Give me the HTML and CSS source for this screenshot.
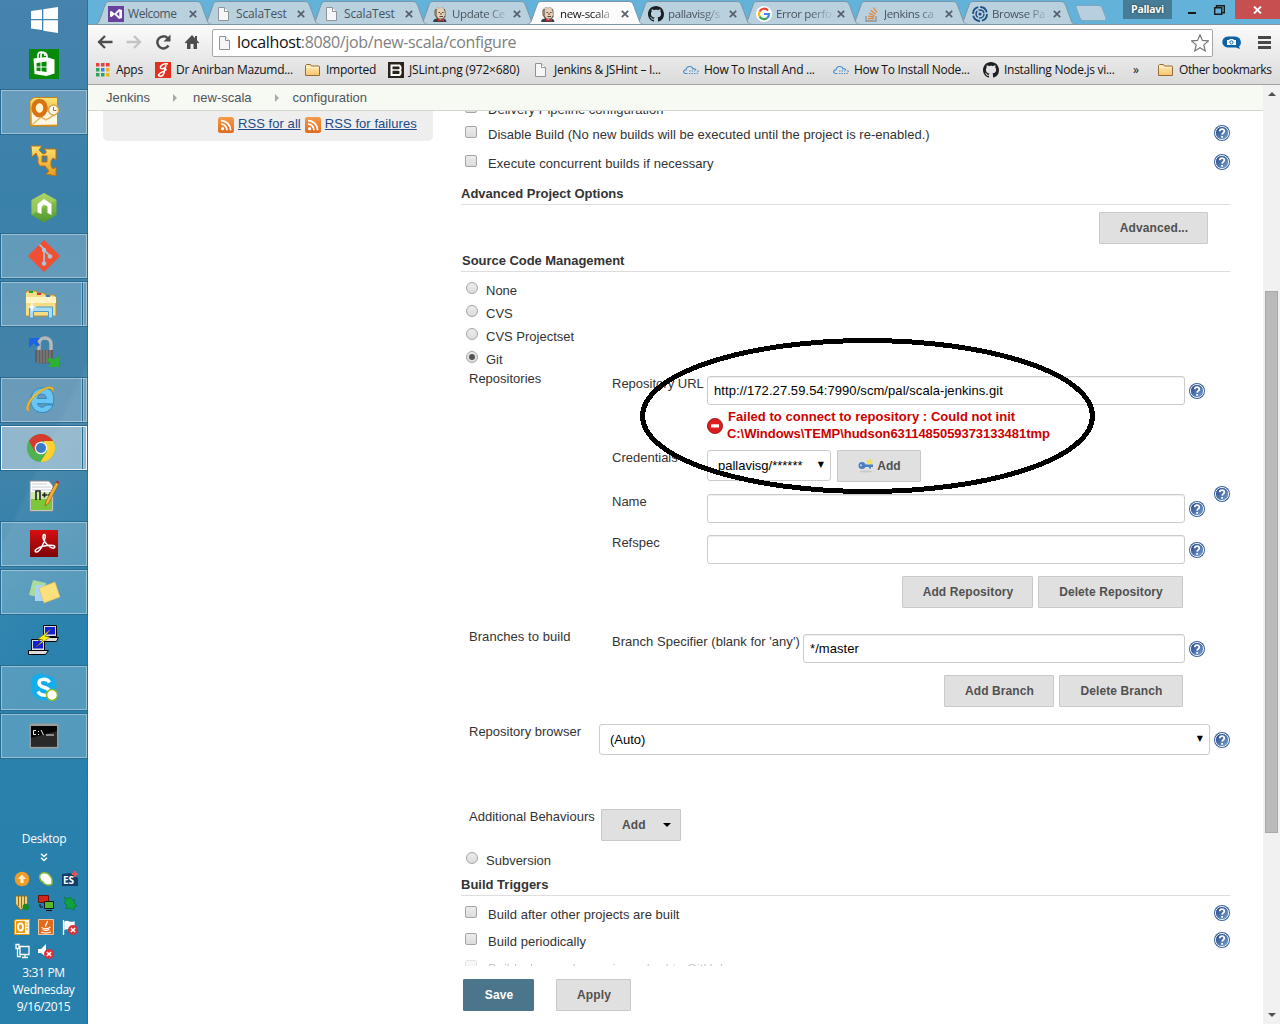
FILE: index.html
```html
<!DOCTYPE html>
<html lang="en">
<head>
<meta charset="utf-8">
<title>new-scala configuration [Jenkins]</title>
<link rel="stylesheet" href="styles.css">
</head>
<body>
<svg class="defs" width="0" height="0">
  <defs>
    <linearGradient id="gh" x1="0" y1="0" x2="1" y2="1"><stop offset="0" stop-color="#1d3f80"/><stop offset="1" stop-color="#7fa6d6"/></linearGradient>
    <linearGradient id="gr" x1="0" y1="0" x2="0" y2="1"><stop offset="0" stop-color="#f59b49"/><stop offset="1" stop-color="#e06a1f"/></linearGradient>
    <linearGradient id="gf" x1="0" y1="0" x2="0" y2="1"><stop offset="0" stop-color="#fff0b8"/><stop offset="1" stop-color="#f9c46c"/></linearGradient>
    <linearGradient id="gy" x1="0" y1="0" x2="0" y2="1"><stop offset="0" stop-color="#ffe375"/><stop offset="1" stop-color="#e79a1c"/></linearGradient>
    <linearGradient id="gn" x1="0" y1="0" x2="0" y2="1"><stop offset="0" stop-color="#a2cf59"/><stop offset="1" stop-color="#4e9a2c"/></linearGradient>
    <linearGradient id="gp" x1="0" y1="0" x2="0" y2="1"><stop offset="0" stop-color="#d60f12"/><stop offset="1" stop-color="#7d0406"/></linearGradient>
  </defs>
  <symbol id="help" viewBox="0 0 16 16"><circle cx="8" cy="8" r="8" fill="#3b639f"/><circle cx="8" cy="8" r="6.600" fill="url(#gh)" stroke="#e8eef8" stroke-width="1"/><path d="M5.700 6.300C5.800 3.400 10.400 3.500 10.300 6.200 10.200 7.800 8.200 7.900 8.100 9.600M8.100 11v1.700" fill="none" stroke="#fff" stroke-width="1.800"/></symbol>
  <symbol id="rss" viewBox="0 0 16 16"><rect width="16" height="16" rx="2.500" fill="url(#gr)"/><circle cx="4.600" cy="11.700" r="1.600" fill="#fff"/><path d="M3 7.200a6 6 0 0 1 6 6M3 3.600a9.600 9.600 0 0 1 9.600 9.600" fill="none" stroke="#fff" stroke-width="1.800"/></symbol>
  <symbol id="page" viewBox="0 0 16 16"><path d="M2.500 1.500h6l4 4v9h-10z" fill="#f4f6f7" stroke="#8e9498"/><path d="M8.500 1.500v4h4" fill="#fff" stroke="#8e9498"/></symbol>
  <symbol id="folder" viewBox="0 0 16 16"><path d="M.5 13.500v-10l1-1h4l1 1.500h7.500l.5.500v9z" fill="url(#gf)" stroke="#9a6a35"/><path d="M1 5.500h13" stroke="#fff3cd"/></symbol>
  <symbol id="github" viewBox="0 0 16 16"><path fill="#1b1f23" fill-rule="evenodd" d="M8 0C3.580 0 0 3.580 0 8c0 3.540 2.290 6.530 5.470 7.590.4.070.55-.17.55-.38 0-.19-.01-.82-.01-1.490-2.010.37-2.530-.49-2.690-.94-.09-.23-.48-.94-.82-1.130-.28-.15-.68-.52-.01-.53.63-.01 1.080.58 1.230.82.72 1.210 1.870.87 2.330.66.07-.52.28-.87.51-1.070-1.780-.2-3.640-.89-3.640-3.950 0-.87.31-1.590.82-2.150-.08-.2-.36-1.020.08-2.120 0 0 .67-.21 2.200.82.64-.18 1.320-.27 2-.27s1.360.09 2 .27c1.530-1.040 2.200-.82 2.200-.82.44 1.100.16 1.920.08 2.120.51.56.82 1.270.82 2.150 0 3.070-1.870 3.750-3.650 3.950.29.25.54.73.54 1.480 0 1.070-.01 1.930-.01 2.200 0 .21.15.46.55.38A8.010 8.010 0 0 0 16 8c0-4.420-3.580-8-8-8z"/></symbol>
  <symbol id="cloud" viewBox="0 0 16 16"><path d="M4.500 11.500H2.300C-.2 11 .2 7.700 3 7.800 3.400 3.800 9.200 3.300 10 7c2-.8 2.800.5 2.700 1.500" fill="none" stroke="#4f8fc7" stroke-width="1.200"/><path d="M6 11.500h7.500c2.500-.3 2-3.200.3-3.200M6 9h6" fill="none" stroke="#4f8fc7" stroke-width="1.200" stroke-dasharray="1.500 1"/></symbol>
  <symbol id="jenkins" viewBox="0 0 16 16"><path d="M2.500 5C3 .5 12.500-1 13.500 5v6l-2 2H5L2.500 9z" fill="#665c50"/><path d="M4.200 5C5 1.500 12 1 12.500 5l.5 4-2 3.500H6.500L4 9z" fill="#e6cfb4"/><path d="M3 3.500C5 .3 11 .2 12.500 3L7 2.700z" fill="#dcd2c4"/><path d="M2.500 5L5 4v6l-2-1z" fill="#8f8474"/><path d="M6.500 6.500h1.500M10 6.500h1.500M9 7v2M7.500 10.500h3.500" stroke="#54463a" fill="none"/><path d="M1 16c0-2.500 2-3.500 4.500-3.500L8 14l3-1.500c2 .2 3.500 1.500 3.500 3.500z" fill="#33424c"/><path d="M6 12.500l3 1.500 3-1.500v3.300l-3-1.300-3 1.300z" fill="#d02c32"/></symbol>
  <symbol id="close" viewBox="0 0 8 8"><path d="M.8.8l6.400 6.400M7.200.8L.8 7.200" stroke="#55606a" stroke-width="1.700"/></symbol>
  <symbol id="tabshape" viewBox="0 0 121 25"><path d="M0 24.500C4 24.500 5 22 6 19L11 5C12 2 13 1.500 16 1.500H102C105 1.500 106 2 107.500 5L113 20C114 23 115 24.500 119 24.500z"/></symbol>
  <symbol id="redx" viewBox="0 0 9 9"><circle cx="4.500" cy="4.500" r="4.500" fill="#d9333a"/><path d="M2.600 2.600l3.800 3.800M6.400 2.600L2.600 6.400" stroke="#fff" stroke-width="1.300"/></symbol>
</svg>

<div class="desktop">
  <aside class="taskbar">
    <div class="start"><svg width="28" height="26" viewBox="0 0 28 26"><path d="M1 4l11-1.600V12H1zM13.300 2.200L28 0v12H13.300zM1 13.300h11v9.800L1 21.500zM13.300 13.300H28V26l-14.700-2.300z" fill="#fff"/></svg></div>
    <div class="task"><svg width="30" height="30" viewBox="0 0 30 30"><path d="M0 0h30v30H0z" fill="#078a0a"/><path d="M4.500 9.500l13-1.500 8 2.500v14l-8 2.500-12-2z" fill="#fff"/><path d="M9 9V6c0-4 7-4 7 1M12 9V5.500c1-3.500 6-2.500 6 2V9" fill="none" stroke="#fff" stroke-width="1.600"/><path d="M7.500 14l4-.6v4H7.500zM12.500 13.200l5-.7v5h-5zM7.500 18.400h4v3.800l-4-.5zM12.500 18.400h5V23l-5-.7z" fill="#078a0a"/></svg></div>
    <div class="task open"><svg width="30" height="30" viewBox="0 0 30 30"><path d="M1 4l4-3.500h23.500V29H1z" fill="url(#gy)" stroke="#c98316"/><path d="M3 13l25 3v11.500L3 28z" fill="#fff7e4"/><path d="M3 28l9-8 5 3 10-6" fill="none" stroke="#e9b65b" stroke-width="1.500"/><ellipse cx="10.500" cy="11" rx="6" ry="7" fill="#fff4cf" stroke="#d8730f" stroke-width="4.500"/><circle cx="24.500" cy="13" r="5" fill="#fffbee" stroke="#d9a64e" stroke-width="1.500"/><path d="M24.500 10v3.500h3" fill="none" stroke="#a77423"/></svg></div>
    <div class="task"><svg width="30" height="32" viewBox="0 0 30 32"><path fill-rule="evenodd" d="M2 2l11 0-3 4 4 4 3-1V7l-2-2h12v11l-3-2-2 3v5l2 3 3-2v9l-10-2 3-3-4-5h-5l-2-3v-5L7 9l-4 4zM13 12v6h5v-6z" fill="url(#gy)" stroke="#b8720e"/></svg></div>
    <div class="task"><svg width="28" height="32" viewBox="0 0 28 32"><path d="M14 1l12.500 7v15L14 30.500 1.500 23V8z" fill="url(#gn)"/><path d="M14 1l12.500 7L14 15 1.500 23V8z" fill="#b3da70" opacity=".5"/><path d="M7.500 12L14 7l7.500 5v11l-4-2v-6.500L14 12.500l-2.500 2V22l-4-1.500z" fill="#fff"/></svg></div>
    <div class="task open"><svg width="32" height="32" viewBox="0 0 32 32"><path d="M16 1l15 15-15 15L1 16z" fill="#f14e32" stroke="#f14e32" stroke-width="1.500" stroke-linejoin="round"/><path d="M11.500 4.500L16 9v14M16 10l6 6" fill="none" stroke="#a9c6d8" stroke-width="1.700"/><circle cx="16" cy="10" r="2.200" fill="#a9c6d8"/><circle cx="22" cy="16.500" r="2.300" fill="#a9c6d8"/><circle cx="16" cy="23.500" r="2.300" fill="#a9c6d8"/></svg></div>
    <div class="task open split"><svg width="34" height="30" viewBox="0 0 34 30"><path d="M1.500 27V4.500L3 2h9l1.500 2H20l1.500 2H30l2 2v19z" fill="#f5dc85" stroke="#b88f34"/><path d="M2 8h30v6H2z" fill="#fdf3c5"/><path d="M5 2h4v2H5z" fill="#19a42a"/><path d="M13 4h4v2h-4z" fill="#d8392d"/><path d="M22 6h4v2h-4z" fill="#2e80d0"/><path d="M5.500 29V18h23v11h-4v-6.500h-15V29z" fill="#a9dcf5" stroke="#4c9cc9"/><path d="M8 12l1 5 4 1-4 1-1 5-1-5-4-1 4-1z" fill="#fff"/></svg></div>
    <div class="task"><svg width="32" height="32" viewBox="0 0 32 32"><path d="M11 15V8c0-8 12-8 12 0v7" fill="none" stroke="#b7b7b7" stroke-width="3.500"/><path d="M7 14h18v12c-5 2-13 2-18 0z" fill="#5f5f5f"/><path d="M10 14v13M13 14v13M16 14v13M19 14v13M22 14v13" stroke="#898989"/><path d="M1 2h11L9 5l3 4-3 2-3-4-5 5z" fill="#1d64e0"/><path d="M31 31H20l3-3-4-4 3-3 4 3 5-4z" fill="#2bb32f"/></svg></div>
    <div class="task open split"><svg width="32" height="32" viewBox="0 0 32 32"><path d="M28.500 20C30 6 24 4 17 4 2 5 2 28 17 28.500c6 0 9-3 11-7.500h-7c-3 4-8 2-8.500-1.500zM12.500 14.500c0-6 8.500-6 9 0z" fill="#69c5f2" stroke="#2280ba" stroke-width=".8" fill-rule="evenodd"/><path d="M4.500 27C-2 28 3 14 13 7.500 22 1 31 1 28 8.500 28 2.500 21 4 15 8.500 6 14.500 1 24 4.500 27z" fill="#f8c72d" stroke="#cd8e16" stroke-width=".6"/></svg></div>
    <div class="task open split active"><svg width="28" height="28" viewBox="0 0 28 28"><circle cx="14" cy="14" r="14" fill="#4fb14f"/><path d="M1.900 7A14 14 0 0 1 26.100 7H14L8 17.500z" fill="#d93a2f"/><path d="M26.100 7A14 14 0 0 1 13.500 28l6.500-10.500L17 7z" fill="#fdd230"/><circle cx="14" cy="14" r="6.300" fill="#f3f3f3"/><circle cx="14" cy="14" r="5" fill="#3b7ac4"/></svg></div>
    <div class="task"><svg width="30" height="32" viewBox="0 0 30 32"><path d="M1 1h19l4 5v25H1z" fill="#fff" stroke="#8c8c8c"/><path d="M2 16h21v14H2z" fill="#7cc637"/><path d="M2 12h21v7H2z" fill="#cbe9a7"/><path d="M3 4h15M3 7h19M3 10h19" stroke="#c6ccd1"/><path d="M7 20v-9h4v9M13 15h5M15.500 12.500v5M18.500 15h5M21 12.500v5" fill="none" stroke="#222" stroke-width="1.600"/><path d="M16 26l1-5L27 2l3 1.500L20 23z" fill="#f0b13b" stroke="#8c5b17" stroke-width=".7"/><path d="M26.500 2.500l1-2 3 1.500-1 2z" fill="#a83838"/></svg></div>
    <div class="task open"><svg width="28" height="28" viewBox="0 0 28 28"><path d="M0 0h28v27H0z" fill="url(#gp)"/><path d="M6 22c-3-1 2-5 8-6 8-2 13 0 10 2-3 1-11-6-11-11 0-4 3-3 2 1-1 6-6 15-9 14z" fill="none" stroke="#fff" stroke-width="1.500"/></svg></div>
    <div class="task open"><svg width="32" height="26" viewBox="0 0 32 26"><path d="M5 1l13 3-3 15-14-3z" fill="#aadb9c"/><path d="M7 6h13v16H7z" fill="#a9d4f5"/><path d="M11 9l16-6 5 15-16 6z" fill="#fbe07e" stroke="#dfb94b" stroke-width=".6"/></svg></div>
    <div class="task"><svg width="32" height="32" viewBox="0 0 32 32"><g fill="#ddd" stroke="#000"><path d="M15.500 1.500h13v11h-13zM12.500 13.500h18l-2 4h-18zM3.500 15.500h13v11h-13zM.5 26.500h20l-3 4H.5z"/></g><path d="M17 3h10v7.500H17zM5 17h10v7.500H5z" fill="#1420d8"/><path d="M23 5L10 15l5 1-7 7 14-10-5-1z" fill="#ffee1c" stroke="#665c00" stroke-width=".5"/></svg></div>
    <div class="task open"><svg width="30" height="30" viewBox="0 0 30 30"><path d="M9 1c3-1 5 0 6 1 9 0 14 6 12 14 2 4 1 9-3 11-3 2-6 1-8 0C7 28 1 21 3 13 0 8 3 2 9 1z" fill="#14adec"/><path d="M20.500 9.500C18 5 10 5.500 10 10c0 5.500 10.500 3.500 10.500 8.500 0 5-9 5-11.500 0" fill="none" stroke="#fff" stroke-width="3.500"/><circle cx="23" cy="22" r="5.500" fill="#fff" stroke="#8bb81c" stroke-width="1.500"/></svg></div>
    <div class="task open"><svg width="30" height="26" viewBox="0 0 30 26"><path d="M.5.500h29v25H.5z" fill="#9b9b9b"/><path d="M2 3h26v20.500H2z" fill="#050505"/><path d="M2 15L28 8v15.500H2z" fill="#292929"/><path d="M7 7.500H4.500v4H7M9.500 8v1M9.500 11v1M12 7l2.500 5M17 12h8" stroke="#eee" fill="none"/></svg></div>
    <div class="tray-title">Desktop</div>
    <svg class="chev" width="8" height="9" viewBox="0 0 8 9"><path d="M1 .8l3 2.700L7 .8M1 4.800l3 2.700 3-2.700" fill="none" stroke="#fff" stroke-width="1.400"/></svg>
    <div class="tray">
      <svg viewBox="0 0 16 16"><circle cx="8" cy="8" r="7.300" fill="#f29b27"/><path d="M8 3.500L12 8H9.500v4h-3V8H4z" fill="#fff3ce"/></svg>
      <svg viewBox="0 0 16 16"><path d="M2 4c2-4 9-2 10 1 3 2 2 6 2 8-3 2-8 1-9-2-3-1-4-5-3-7z" fill="#fff" stroke="#8db632" stroke-width="1.500"/></svg>
      <svg viewBox="0 0 16 16"><path d="M0 3l8-1 8 5v8H0z" fill="#123d6a"/><text x="1" y="13" class="es">ES</text><path d="M13 0v6M10 3h6" stroke="#f05050" stroke-width="2.200"/></svg>
      <svg viewBox="0 0 16 16"><path d="M1.500 1h12v8L7 15 1.500 9z" fill="#ead07c" stroke="#8e6d24"/><path d="M4.500 1v10M7.500 1v12M10.500 1v9" stroke="#8e6d24"/><circle cx="12" cy="12" r="3.300" fill="#168a2b"/></svg>
      <svg viewBox="0 0 16 16"><path d="M.5.500h10v7H.5z" fill="#d2261b" stroke="#6a100b"/><path d="M6.500 6.500h9v7h-9z" fill="#58b72c" stroke="#151515"/><path d="M8 15.500h6M2 9v3h3" stroke="#111" fill="none"/></svg>
      <svg viewBox="0 0 16 16"><path d="M2 2l4 2 2-2 2 3h3l-1 3 3 3-3 1v3l-4-2-4 1 1-4-3-2 2-2z" fill="#0fa23e" stroke="#087a2b" stroke-width=".7"/></svg>
      <svg viewBox="0 0 16 16"><path d="M.5 1.500l2-1h13v15H.5z" fill="#fff5da" stroke="#df9816"/><path d="M2 2h9v12H2z" fill="#e99c18"/><ellipse cx="6.500" cy="8" rx="2.500" ry="3.700" fill="none" stroke="#fff" stroke-width="1.700"/><path d="M12 4h2M12 7h2M12 10h2" stroke="#df9816"/></svg>
      <svg viewBox="0 0 16 16"><path d="M.5.500h15v15H.5z" fill="#e26a18" stroke="#f8c49a"/><path d="M9 2c2 2-3 3-1 6M3.500 8.500C6 10 10 10 12.500 8M4.500 10.500c2 1 5 1 7 0M3 13c3 1.300 7 1.300 10 0" fill="none" stroke="#fff" stroke-width="1.200"/></svg>
      <svg viewBox="0 0 16 16"><path d="M1.500 1v15M3 3c3-2 4 2 9 0v7c-4 2-6-2-9 0z" fill="#fff" stroke="#fff" stroke-width="1.300"/><use href="#redx" x="6" y="6" width="10" height="10"/></svg>
      <svg viewBox="0 0 16 16"><path d="M6 3.500h9v8H6zM8 14.500h6M11 12v2M2 1.500h3v4H2zM3.500 6v7.500H7" fill="none" stroke="#fff" stroke-width="1.300"/></svg>
      <svg viewBox="0 0 16 16"><path d="M0 6h3l5-5v13L3 10H0z" fill="#fff"/><use href="#redx" x="6" y="6" width="10" height="10"/></svg>
    </div>
    <div class="clock">3:31 PM<br>Wednesday<br>9/16/2015</div>
  </aside>

  <div class="browser">
    <header class="tabstrip">
      <div class="tab"><svg class="shape"><use href="#tabshape"/></svg><svg class="ico" viewBox="0 0 16 16"><path d="M0 0h16v16H0z" fill="#68419b"/><path d="M2 5.500L3.500 5l3 2.500L11 3l3 1v8l-3 1-4.500-4.500-3 2.500L2 10.500zM11.300 5.500L8.500 8l2.800 2.500z" fill="#fff" fill-rule="evenodd"/></svg><span>Welcome</span><svg class="x"><use href="#close"/></svg></div>
      <div class="tab"><svg class="shape"><use href="#tabshape"/></svg><svg class="ico"><use href="#page"/></svg><span>ScalaTest</span><svg class="x"><use href="#close"/></svg></div>
      <div class="tab"><svg class="shape"><use href="#tabshape"/></svg><svg class="ico"><use href="#page"/></svg><span>ScalaTest</span><svg class="x"><use href="#close"/></svg></div>
      <div class="tab"><svg class="shape"><use href="#tabshape"/></svg><svg class="ico"><use href="#jenkins"/></svg><span>Update Ce</span><svg class="x"><use href="#close"/></svg></div>
      <div class="tab current"><svg class="shape"><use href="#tabshape"/></svg><svg class="ico"><use href="#jenkins"/></svg><span>new-scala</span><svg class="x"><use href="#close"/></svg></div>
      <div class="tab"><svg class="shape"><use href="#tabshape"/></svg><svg class="ico"><use href="#github"/></svg><span>pallavisg/s</span><svg class="x"><use href="#close"/></svg></div>
      <div class="tab"><svg class="shape"><use href="#tabshape"/></svg><svg class="ico" viewBox="0 0 16 16"><circle cx="8" cy="8" r="8" fill="#fff"/><g fill="none" stroke-width="2.200"><path d="M12 4.600A5 5 0 0 0 3.600 5.500" stroke="#ea4335"/><path d="M3.600 5.500a5 5 0 0 0 0 5" stroke="#fbbc05"/><path d="M3.600 10.500A5 5 0 0 0 11 12.200" stroke="#34a853"/><path d="M11 12.200A5 5 0 0 0 13 8H8" stroke="#4285f4"/></g></svg><span>Error perfo</span><svg class="x"><use href="#close"/></svg></div>
      <div class="tab"><svg class="shape"><use href="#tabshape"/></svg><svg class="ico" viewBox="0 0 16 16"><path d="M2 10v5h10v-5" fill="none" stroke="#8d9396" stroke-width="1.300"/><path d="M4 12.700h6M4.200 10.200l6 .8M5 7.300l5.600 2.200M6.700 4.300l4.700 3.700M9.500 1.500l3.300 5" stroke="#e98532" stroke-width="1.300"/></svg><span>Jenkins ca</span><svg class="x"><use href="#close"/></svg></div>
      <div class="tab"><svg class="shape"><use href="#tabshape"/></svg><svg class="ico" viewBox="0 0 16 16"><circle cx="8" cy="8" r="7" fill="none" stroke="#205081" stroke-width="1.800" stroke-dasharray="9 2"/><circle cx="8" cy="8" r="4" fill="none" stroke="#205081" stroke-width="1.500" stroke-dasharray="7 1.400"/><circle cx="8" cy="8" r="1.600" fill="#205081"/></svg><span>Browse Pa</span><svg class="x"><use href="#close"/></svg></div>
      <svg class="newtab" width="32" height="16" viewBox="0 0 32 16"><path d="M1 2Q.5.500 3 .5h21q2 0 3 2L31 13q.5 2-1.500 2.500H8Q6 15.500 5 13z" fill="#b7cfde" stroke="#7ea6bd"/></svg>
      <div class="user">Pallavi</div>
      <div class="winbtn min"><i></i></div>
      <div class="winbtn"><svg width="11" height="10" viewBox="0 0 11 10"><path d="M.7 2.700h7v6.600h-7zM2.500 2.500V.7h7.800v7H8" fill="none" stroke="#1a1a1a" stroke-width="1.400"/></svg></div>
      <div class="winclose"><svg width="9" height="8" viewBox="0 0 9 8"><path d="M1 .5l7 7M8 .5l-7 7" stroke="#fff" stroke-width="1.800"/></svg></div>
    </header>

    <div class="toolbar">
      <svg class="nav" viewBox="0 0 16 16"><path d="M15.500 8H2M8 2L2 8l6 6" fill="none" stroke="#4d4d4d" stroke-width="2.300"/></svg>
      <svg class="nav" viewBox="0 0 16 16"><path d="M.5 8H14M8 2l6 6-6 6" fill="none" stroke="#c4c4c4" stroke-width="2.300"/></svg>
      <svg class="nav" viewBox="0 0 16 16"><path d="M13.500 11.500A6 6 0 1 1 12.500 4" fill="none" stroke="#4d4d4d" stroke-width="2.500"/><path d="M15.500.5v7H8.500z" fill="#4d4d4d"/></svg>
      <svg class="nav" viewBox="0 0 16 16"><path d="M8 1L.8 8.600l1 1L3 8.500V15h3.500v-5h3v5H13V8.500l1.200 1.100 1-1L13 6.200V2h-2v2.200z" fill="#4d4d4d"/></svg>
      <div class="omni"><svg class="ico"><use href="#page"/></svg><span class="url"><b>localhost</b>:8080/job/new-scala/configure</span><svg class="star" width="18" height="18" viewBox="0 0 18 18"><path d="M9 .8l2.400 5.600 6 .5-4.600 4 1.400 6L9 13.700 3.800 16.900l1.400-6-4.600-4 6-.5z" fill="#fff" stroke="#777" stroke-width="1.200"/></svg></div>
      <svg class="cam" width="19" height="13" viewBox="0 0 19 13"><path d="M6 .5h7C20 1 20 9 17 10.500l1 2.500-4-1.500H6C-1.500 11-1.500 1 6 .5z" fill="#0a62a8"/><path d="M5 4h2l1-1h3l1 1h2v5H5z" fill="#fff"/><circle cx="9.500" cy="6.400" r="1.600" fill="none" stroke="#0a62a8"/></svg>
      <div class="burger"><i></i><i></i><i></i></div>
    </div>

    <nav class="bookmarks">
      <a><svg class="ico" viewBox="0 0 16 16"><path d="M1 1h3.500v3.500H1zM6 1h3.500v3.500H6zM11 1h3.500v3.500H11z" fill="#e8413c"/><path d="M1 6h3.500v3.500H1zM1 11h3.500v3.500H1zM6 11h3.500v3.500H6z" fill="#2fa45a"/><path d="M6 6h3.500v3.500H6z" fill="#3886e8"/><path d="M11 6h3.500v3.500H11zM11 11h3.500v3.500H11z" fill="#f1b21f"/></svg><span>Apps</span></a>
      <a><svg class="ico" viewBox="0 0 16 16"><path d="M0 0h16v16H0z" fill="#e0301e"/><path d="M13 2C7 1 4 5 6 6.500c3 1 5-2 5-3.500L9 11c-1 4-5 4-5.500 2 1-3 6-3 8-6" fill="none" stroke="#fff" stroke-width="1.500"/></svg><span>Dr Anirban Mazumd...</span></a>
      <a><svg class="ico"><use href="#folder"/></svg><span>Imported</span></a>
      <a><svg class="ico" viewBox="0 0 16 16"><path d="M0 0h16v16H0z" fill="#2a2319"/><path d="M3.500 3.500h8l1 1.500v2l-1 1 1 1v2.500l-1 1.500h-8z" fill="none" stroke="#fff" stroke-width="2"/><path d="M4 8h8" stroke="#fff" stroke-width="1.500"/></svg><span class="jslint">JSLint.png (972×680)</span></a>
      <a><svg class="ico"><use href="#page"/></svg><span>Jenkins &amp; JSHint – I...</span></a>
      <a><svg class="ico"><use href="#cloud"/></svg><span>How To Install And ...</span></a>
      <a><svg class="ico"><use href="#cloud"/></svg><span>How To Install Node...</span></a>
      <a><svg class="ico"><use href="#github"/></svg><span>Installing Node.js vi...</span></a>
      <a class="more">»</a>
      <a><svg class="ico"><use href="#folder"/></svg><span class="other">Other bookmarks</span></a>
    </nav>

    <div class="viewport">
      <div class="page">
        <div class="crumbs"><span>Jenkins</span><i></i><span>new-scala</span><i></i><span>configuration</span></div>
        <div class="body">
          <div class="side"><div class="feeds"><svg class="ico"><use href="#rss"/></svg><a>RSS for all</a><svg class="ico"><use href="#rss"/></svg><a>RSS for failures</a></div></div>
          <main class="form">
            <div class="opt r0"><i class="box"></i><span>Delivery Pipeline configuration</span></div>
            <div class="opt r1"><i class="box"></i><span>Disable Build (No new builds will be executed until the project is re-enabled.)</span><svg class="ico"><use href="#help"/></svg></div>
            <div class="opt r2"><i class="box"></i><span>Execute concurrent builds if necessary</span><svg class="ico"><use href="#help"/></svg></div>
            <h2>Advanced Project Options</h2>
            <div class="advrow"><button class="btn adv">Advanced...</button></div>
            <h2 class="scm">Source Code Management</h2>
            <div class="radios">
              <div class="rad"><i class="dot"></i><span>None</span></div>
              <div class="rad"><i class="dot"></i><span>CVS</span></div>
              <div class="rad"><i class="dot"></i><span>CVS Projectset</span></div>
              <div class="rad"><i class="dot on"></i><span>Git</span></div>
            </div>

            <section class="git repos">
              <label class="group">Repositories</label>
              <div class="fields">
                <div class="field f-url"><label>Repository URL</label><div class="input">http://172.27.59.54:7990/scm/pal/scala-jenkins.git</div><svg class="ico"><use href="#help"/></svg></div>
                <div class="error"><svg class="ico" viewBox="0 0 16 16"><circle cx="8" cy="8" r="7.600" fill="#dc1c20" stroke="#8d1012" stroke-width=".8"/><path d="M4 6.300h8v3.200H4z" fill="#fff"/></svg><div><span class="l1">Failed to connect to repository : Could not init</span><br><span class="l2">C:\Windows\TEMP\hudson6311485059373133481tmp</span></div></div>
                <div class="field f-cred"><label>Credentials</label><div class="select cred">pallavisg/******<b>▼</b></div><button class="btn key"><svg width="16" height="14" viewBox="0 0 16 14"><ellipse cx="8" cy="12.500" rx="6" ry="1" fill="#c9c9c9"/><circle cx="11.500" cy="3" r="2.800" fill="#f4e43f" opacity=".8"/><circle cx="4" cy="6.500" r="3.500" fill="#4b7fc0"/><path d="M6 5.500h9v2.500h-2v1.500h-2V8H6z" fill="#4b7fc0"/><circle cx="3" cy="6.300" r="1" fill="#c7dbf2"/></svg>Add</button></div>
                <div class="field f-in"><label>Name</label><div class="input"></div><svg class="ico"><use href="#help"/></svg></div>
                <div class="field f-in"><label>Refspec</label><div class="input"></div><svg class="ico"><use href="#help"/></svg></div>
                <div class="btns"><button class="btn w131">Add Repository</button><button class="btn w145">Delete Repository</button></div>
              </div>
              <svg class="ico outer"><use href="#help"/></svg>
            </section>

            <section class="git branches">
              <label class="group">Branches to build</label>
              <div class="fields">
                <div class="field f-br"><label>Branch Specifier (blank for 'any')</label><div class="input">*/master</div><svg class="ico"><use href="#help"/></svg></div>
                <div class="btns"><button class="btn w110">Add Branch</button><button class="btn w124">Delete Branch</button></div>
              </div>
            </section>

            <section class="browse"><label>Repository browser</label><div class="select">(Auto)<b>▼</b></div><svg class="ico"><use href="#help"/></svg></section>
            <section class="extra"><label>Additional Behaviours</label><button class="btn addb">Add<i></i></button></section>
            <div class="rad svn"><i class="dot"></i><span>Subversion</span></div>
            <h2 class="trig">Build Triggers</h2>
            <div class="opt t1"><i class="box"></i><span>Build after other projects are built</span><svg class="ico"><use href="#help"/></svg></div>
            <div class="opt t2"><i class="box"></i><span>Build periodically</span><svg class="ico"><use href="#help"/></svg></div>
            <div class="opt t3"><i class="box"></i><span>Build when a change is pushed to GitHub</span></div>
          </main>
        </div>
        <footer class="actions"><button class="btn save">Save</button><button class="btn apply">Apply</button></footer>
      </div>
      <div class="scroll"><i class="up"></i><div class="thumb"></div><i class="down"></i></div>
    </div>
  </div>
  <svg class="marker" width="460" height="160" viewBox="0 0 460 160"><ellipse cx="229.500" cy="80" rx="225" ry="75.500" fill="none" stroke="#000" stroke-width="5" shape-rendering="crispEdges"/></svg>
</div>
</body>
</html>
```
FILE: styles.css
```css
* { box-sizing: border-box; }
body { margin: 0; overflow: hidden; font: 13px/16px "Liberation Sans", Arial, sans-serif; color: #333; background: #fff; }
.defs { position: absolute; }
.desktop { position: relative; display: flex; width: 1280px; height: 1024px; }
.ico { width: 16px; height: 16px; flex: none; }
i, b, h2 { font-style: normal; }

/* taskbar */
.taskbar { width: 88px; height: 1024px; flex: none; border-right: 1px solid #26719a; color: #fff; text-align: center; font-family: "Open Sans", sans-serif; display: flex; flex-direction: column; align-items: center;
  background: linear-gradient(115deg, rgba(255,255,255,0) 45%, rgba(255,255,255,.05) 46%, rgba(255,255,255,0) 62%), linear-gradient(#4783ac 0, #3a81aa 200px, #4683a8 420px, #2a82ad 620px, #2780ab 1024px); }
.start { height: 41px; flex: none; display: flex; align-items: center; padding-bottom: 2px; }
.task { width: 88px; height: 46px; margin-bottom: 2px; flex: none; display: flex; align-items: center; justify-content: center; border: 1px solid transparent; }
.task.open { border-color: #276b92; background: rgba(255,255,255,.2); box-shadow: inset 0 0 0 1px rgba(255,255,255,.38); }
.task.split { background: linear-gradient(90deg, transparent 80px, #d0e0ea66 80px, #d0e0ea66 81px, #276b92 81px, #276b92 82px, #d0e0ea66 82px, #d0e0ea66 83px, transparent 83px), rgba(255,255,255,.2); padding-right: 6px; }
.task.active { background-color: rgba(255,255,255,.42); box-shadow: inset 0 0 0 1px rgba(255,255,255,.85); }
.tray-title { margin-top: 69px; padding-left: 1px; font-size: 12px; line-height: 18px; letter-spacing: -.25px; }
.chev { margin-top: 5px; }
.tray { display: grid; grid-template-columns: repeat(3, 16px); gap: 8px; margin-top: 9px; margin-left: 4px; height: 88px; }
.tray svg { width: 16px; height: 16px; }
.es { font: bold 10px "Open Sans", sans-serif; fill: #fff; }
.clock { margin-top: 5px; font-size: 12px; line-height: 17px; letter-spacing: -.35px; }

/* browser chrome */
.browser { width: 1192px; height: 1024px; display: flex; flex-direction: column; }
.tabstrip { height: 25px; background: #62b2d9; display: flex; padding-left: 6px; border-bottom: 1px solid #8796a0; font: 12px/16px "Open Sans", sans-serif; }
.tab { position: relative; width: 108px; height: 25px; flex: none; display: flex; align-items: center; padding: 2px 0 0 14px; color: #47535d; }
.tab .shape { position: absolute; left: 0; top: 0; width: 121px; height: 25px; fill: #b9d0df; stroke: #7c96a6; }
.tab:nth-child(1) { z-index: 9; } .tab:nth-child(2) { z-index: 8; } .tab:nth-child(3) { z-index: 7; } .tab:nth-child(4) { z-index: 6; }
.tab:nth-child(6) { z-index: 5; } .tab:nth-child(7) { z-index: 4; } .tab:nth-child(8) { z-index: 3; } .tab:nth-child(9) { z-index: 2; }
.tab.current { z-index: 10; color: #111; }
.tab.current .shape { fill: #fbfbfb; }
.tab .ico { position: relative; }
.tab span { position: relative; width: 57px; margin-left: 4px; white-space: nowrap; font-size: 11.500px; letter-spacing: -.35px; -webkit-mask-image: linear-gradient(90deg, #000 60%, #0003 92%); mask-image: linear-gradient(90deg, #000 60%, #0003 92%); }
.tab:nth-child(1) span, .tab:nth-child(2) span, .tab:nth-child(3) span { font-size: 12px; letter-spacing: -.15px; -webkit-mask-image: none; mask-image: none; }
.tab:nth-child(1) span { letter-spacing: -.45px; }
.tab .x { position: relative; width: 8px; height: 8px; margin-left: 4px; }
.newtab { margin: 5px 0 0 9px; }
.user { width: 49px; height: 19px; margin-left: 16px; background: #467c97; color: #fff; font: bold 10.500px/18px "Open Sans", sans-serif; letter-spacing: -.3px; text-align: center; text-shadow: 0 0 2px #222; }
.winbtn { width: 26px; height: 19px; display: flex; justify-content: center; align-items: center; }
.winbtn.min { width: 34px; padding: 6px 0 0 6px; }
.winbtn.min i { width: 8px; height: 2px; background: #1a1a1a; }
.winclose { width: 45px; height: 19px; margin-left: 3px; background: #c74f50; display: flex; align-items: center; justify-content: center; }
.toolbar { height: 32px; flex: none; background: linear-gradient(#fbfbfb, #e9e9e9); display: flex; align-items: center; padding-left: 9px; padding-top: 3px; }
.nav { width: 16px; height: 16px; margin: -1px 13px 0 0; flex: none; }
.omni { width: 1001px; height: 28px; margin-left: -1px; background: #fff; border: 1px solid #a6a6a6; border-radius: 2px; display: flex; align-items: center; padding: 0 3px 0 4px; }
.url { font: 16px/24px "Open Sans", sans-serif; letter-spacing: -.36px; margin: -1px 0 0 4px; flex: 1; color: #808080; }
.url b { font-weight: 400; color: #111; }
.cam { margin-left: 9px; }
.burger { width: 13px; margin-left: 17px; display: grid; gap: 2px; }
.burger i { height: 3px; background: #484848; }
.bookmarks { height: 28px; flex: none; background: linear-gradient(#e9e9e9, #dbdbdb); border-bottom: 1px solid #a3a3a3; display: grid; align-items: center; padding: 0 0 2px 7px; font: 12px/16px "Open Sans", sans-serif; color: #111;
  grid-template-columns: 60px 150px 83px 145px 150px 150px 150px 150px 25px 115px; letter-spacing: -.28px; }
.bookmarks a { display: flex; gap: 5px; align-items: center; white-space: nowrap; }
.jslint { letter-spacing: -.15px; }
.other { letter-spacing: -.4px; }

/* page */
.viewport { display: flex; height: 939px; }
.page { width: 1175px; display: flex; flex-direction: column; }
.crumbs { height: 26px; flex: none; background: #f6faf2; border-bottom: 1px solid #d3d8cf; padding: 0 0 0 18px; display: flex; align-items: center; color: #4d545d; }
.crumbs i { border: 4px solid transparent; border-left-color: #a9a9a9; border-right: 0; margin: 0 16px 0 23px; }
.crumbs i + span:last-child { margin-left: -2px; }
.body { height: 855px; flex: none; overflow: hidden; display: flex; padding-left: 15px; }
.side { width: 330px; height: 30px; background: #eee; border-radius: 0 0 5px 5px; }
.feeds { display: flex; align-items: center; padding: 3px 0 0 115px; gap: 4px; white-space: nowrap; letter-spacing: .06px; }
.feeds .ico { margin-top: 3px; }
.feeds a { text-decoration: underline; color: #204a87; }
.form { width: 769px; margin: -14px 0 0 28px; }
.opt { display: flex; align-items: center; padding-left: 4px; }
.opt span { flex: 1; margin-left: 10px; letter-spacing: .02px; }
.box { width: 12px; height: 12px; margin: -6px 1px 0 0; border: 1px solid #a5a5a5; border-radius: 2px; background: linear-gradient(#ececec, #dcdcdc); }
.opt .ico { margin-top: -3px; }
.r0 { height: 24px; padding-top: 1px; } .r1 { height: 27px; } .r2 { height: 30px; padding-top: 1px; }
.r2 span { letter-spacing: .08px; }
.r2 .ico { margin-top: -4px; }
h2 { margin: 0; height: 27px; border-bottom: 1px solid #ddd; font: bold 13px/32px "Liberation Sans", Arial, sans-serif; }
.advrow { display: flex; justify-content: flex-end; padding: 7px 22px 0 0; height: 45px; }
h2.scm { height: 22px; line-height: 21px; padding-left: 1px; letter-spacing: -.04px; }
.radios { padding-top: 7px; }
.rad { display: flex; align-items: center; height: 23px; padding-left: 5px; }
.dot { width: 12px; height: 12px; margin: -6px 8px 0 0; border: 1px solid #a5a5a5; border-radius: 50%; background: linear-gradient(#ececec, #dcdcdc); display: flex; align-items: center; justify-content: center; }
.dot.on::after { content: ""; width: 6px; height: 6px; border-radius: 50%; background: #555; }
.btn { height: 32px; padding: 0 0 0 1px; flex: none; border: 1px solid #c9c9c9; border-radius: 1px; background: #e0e0e0; color: #505050; font: bold 12px/30px "Liberation Sans", Arial, sans-serif; letter-spacing: .1px; }
.adv { width: 109px; }
.git { display: grid; grid-template-columns: 143px 593px 1fr; padding-left: 8px; }
.field { display: flex; }
.field label { width: 95px; white-space: nowrap; }
.input { width: 478px; height: 29px; margin-right: 4px; border: 1px solid #ccc; border-radius: 3px; padding-left: 6px; line-height: 27px; color: #000; box-shadow: inset 0 1px 1px rgba(0,0,0,.07); }
.field .ico { margin-top: 7px; }
.f-url { padding-top: 5px; }
.f-url .input { letter-spacing: .07px; }
.error { display: flex; align-items: center; gap: 4px; height: 34px; margin: 3px 0 0 95px; color: #c00; font-weight: bold; line-height: 17px; white-space: nowrap; }
.error .ico { margin-top: 2px; }
.l1 { margin-left: 1px; letter-spacing: .04px; }
.l2 { letter-spacing: -.05px; }
.f-cred { margin-top: 8px; }
.select { height: 31px; border: 1px solid #ccc; border-radius: 3px; padding: 0 6px 0 10px; display: flex; justify-content: space-between; line-height: 29px; color: #000; }
.select b { font: 8px/28px "DejaVu Sans", sans-serif; }
.cred { width: 124px; margin-right: 6px; padding-right: 6px; }
.key { width: 84px; display: flex; align-items: center; justify-content: center; gap: 3px; }
.f-in { margin-top: 12px; }
.btns { display: flex; justify-content: flex-end; gap: 5px; padding: 12px 22px 0 0; }
.w131 { width: 131px; } .w145 { width: 145px; } .w110 { width: 110px; } .w124 { width: 124px; }
.outer { margin: 115px 0 0 9px; }
.branches { margin-top: 26px; }
.branches .group { margin-top: -5px; letter-spacing: .06px; }
.f-br label { width: 191px; letter-spacing: .02px; }
.f-br .input { width: 382px; letter-spacing: .07px; }
.browse { display: flex; padding-left: 8px; margin-top: 17px; }
.browse label { width: 130px; }
.browse .select { width: 611px; margin-right: 4px; }
.browse .ico { margin-top: 8px; }
.extra { display: flex; margin-top: 54px; padding-left: 8px; }
.extra label { width: 132px; }
.addb { width: 80px; display: flex; align-items: center; justify-content: space-between; padding: 0 9px 0 20px; }
.addb i { border: 4px solid transparent; border-top-color: #000; border-bottom: 0; }
.svn { margin-top: 8px; }
h2.trig { height: 24px; line-height: 26px; }
.t1 { height: 31px; padding-top: 7px; }
.t2 { height: 27px; padding-top: 3px; }
.t1 .ico, .t2 .ico { margin-top: -5px; }
.t3 { height: 29px; padding-top: 1px; opacity: .28; }
.actions { display: flex; padding: 13px 0 0 375px; height: 58px; }
.save { width: 71px; background: #4b758b; border-color: #4b758b; color: #fff; }
.apply { width: 75px; margin-left: 22px; }
.scroll { width: 17px; background: #f1f1f1; display: flex; flex-direction: column; align-items: center; padding: 7px 0; }
.scroll i { border: 4px solid transparent; width: 8px; }
.scroll .up { border-bottom-color: #505050; border-top: 0; }
.scroll .down { border-top-color: #505050; border-bottom: 0; margin-top: auto; }
.thumb { width: 13px; height: 542px; margin-top: 195px; background: #bababa; border: 1px solid #a8a8a8; }

/* ring drawn over the form */
.marker { position: absolute; left: 638px; top: 336px; }
```
